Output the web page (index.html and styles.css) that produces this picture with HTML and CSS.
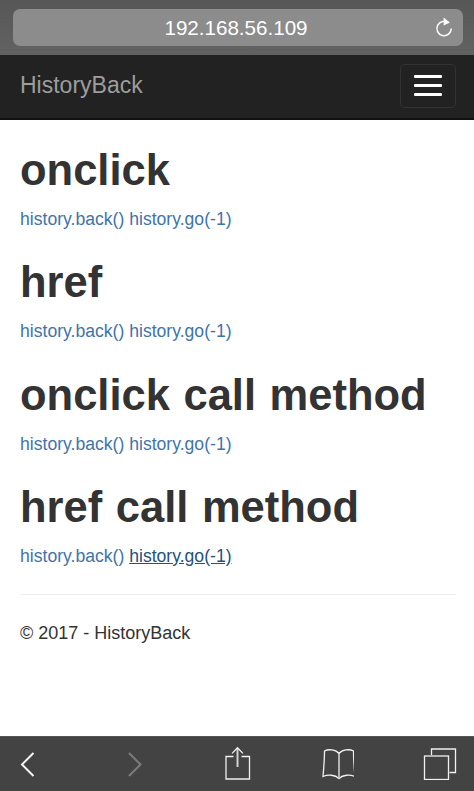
FILE: index.html
```html
<!DOCTYPE html>
<html lang="en">
<head>
<meta charset="utf-8">
<title>HistoryBack</title>
<link rel="stylesheet" href="styles.css">
</head>
<body>
<div class="phone">
  <header class="safari-top">
    <div class="url-pill">
      <span class="url-text">192.168.56.109</span>
      <svg class="reload" viewBox="0 0 20 22" width="20" height="22" aria-hidden="true">
        <path d="M14.6 6.9A7.2 7.2 0 1 0 17.3 12.6" fill="none" stroke="#fff" stroke-width="1.5"/>
        <path d="M9.6 1.6L15.8 6.4L9.6 9.4Z" fill="#fff"/>
      </svg>
    </div>
  </header>
  <nav class="navbar">
    <a class="brand" href="#">HistoryBack</a>
    <button class="toggle" type="button" aria-label="Menu"><span></span><span></span><span></span></button>
  </nav>
  <main class="content">
    <section class="block">
      <h1>onclick</h1>
      <p class="links"><a href="#">history.back()</a> <a href="#">history.go(-1)</a></p>
    </section>
    <section class="block">
      <h1>href</h1>
      <p class="links"><a href="#">history.back()</a> <a href="#">history.go(-1)</a></p>
    </section>
    <section class="block">
      <h1>onclick call method</h1>
      <p class="links"><a href="#">history.back()</a> <a href="#">history.go(-1)</a></p>
    </section>
    <section class="block">
      <h1>href call method</h1>
      <p class="links"><a href="#">history.back()</a> <a class="hover" href="#">history.go(-1)</a></p>
    </section>
    <hr class="rule">
    <footer class="foot">© 2017 - HistoryBack</footer>
  </main>
  <div class="safari-bottom">
    <svg class="tool" height="26" viewBox="0 0 18 26" aria-hidden="true"><path d="M13.500 2L2 13.500L13.500 25" fill="none" stroke="#f4f4f4" stroke-width="2"/></svg>
    <svg class="tool" height="26" viewBox="-1.500 0 18 26" aria-hidden="true"><path d="M4.500 2L16 13.500L4.500 25" fill="none" stroke="#7c7c7c" stroke-width="2"/></svg>
    <svg class="tool tool-up" height="34" viewBox="-2.500 0 26 34" aria-hidden="true">
      <path d="M9 10.500H1.500V33H25V10.500H17" fill="none" stroke="#f0f0f0" stroke-width="1.300"/>
      <path d="M13 2V21" stroke="#d0d0d0" stroke-width="2"/>
      <path d="M7.600 7.400L13 1.800L18.400 7.400" fill="none" stroke="#f0f0f0" stroke-width="1.300"/>
    </svg>
    <svg class="tool" height="32" viewBox="-2 0 34 32" aria-hidden="true">
      <path d="M17 5.500C14 1.500 6.500 0.800 2.500 3C2.500 11 1.800 20 1 28.500C6 26.500 13 26.500 17 30.500C21 26.500 28 26.500 33 28.500C32.200 20 31.500 11 31.500 3C27.500 0.800 20 1.500 17 5.500ZM17 5.500V29" fill="none" stroke="#f0f0f0" stroke-width="1.300"/>
    </svg>
    <svg class="tool" height="32" viewBox="0 0 33 32" aria-hidden="true">
      <path d="M8 7V1H32V24.500H26" fill="none" stroke="#f0f0f0" stroke-width="1.300"/>
      <rect x="1" y="8" width="24" height="23.500" fill="none" stroke="#f0f0f0" stroke-width="1.300"/>
    </svg>
  </div>
</div>
</body>
</html>
```

FILE: styles.css
```css
* { box-sizing: border-box; }
html, body { margin: 0; height: 100%; }
body { background: #fff; font-family: "Liberation Sans", Arial, sans-serif; overflow: hidden; }
.phone { width: 474px; height: 791px; display: flex; flex-direction: column; }
.safari-top { height: 55px; padding: 9px 11px 9px 13px; background: linear-gradient(#575757, #626262); }
.url-pill { position: relative; height: 37px; border-radius: 7px; background: #8c8c8c; display: flex; align-items: center; justify-content: center; }
.url-text { color: #fff; font-size: 20.600px; margin-right: 4px; }
.reload { position: absolute; right: 9px; top: 7px; }
.navbar { height: 65px; background: #222; border-bottom: 2px solid #111; display: flex; align-items: center; justify-content: space-between; padding: 0 18px 2px 20px; }
.brand { color: #9d9d9d; font-size: 23px; text-decoration: none; }
.toggle { width: 56px; height: 44px; background: none; border: 1px solid #333; border-radius: 5px; padding: 0; display: flex; flex-direction: column; align-items: center; justify-content: center; gap: 6px; }
.toggle span { width: 28px; height: 3px; background: #fff; border-radius: 1px; }
.content { flex: 1; padding: 0 18px 0 20px; color: #333; }
.block { height: 112.300px; padding-top: 27px; }
.block h1 { margin: 0; font-size: 43.500px; line-height: 47px; font-weight: bold; word-spacing: 1.500px; color: #333; }
.links { margin: 13px 0 0; font-size: 17.600px; line-height: 25px; white-space: nowrap; }
.links a { color: #3f74ab; text-decoration: none; }
.links a.hover { color: #23527c; text-decoration: underline; }
.rule { margin: 25px 0 0; border: 0; border-top: 1px solid #eee; }
.foot { margin-top: 26px; font-size: 18px; line-height: 25px; color: #333; }
.safari-bottom { height: 55px; background: #434343; border-top: 1px solid #555; display: flex; align-items: center; justify-content: space-between; padding: 0 17px 0 12px; }
.tool { width: 34px; flex: none; }
.tool-up { margin-top: -2px; }
```
